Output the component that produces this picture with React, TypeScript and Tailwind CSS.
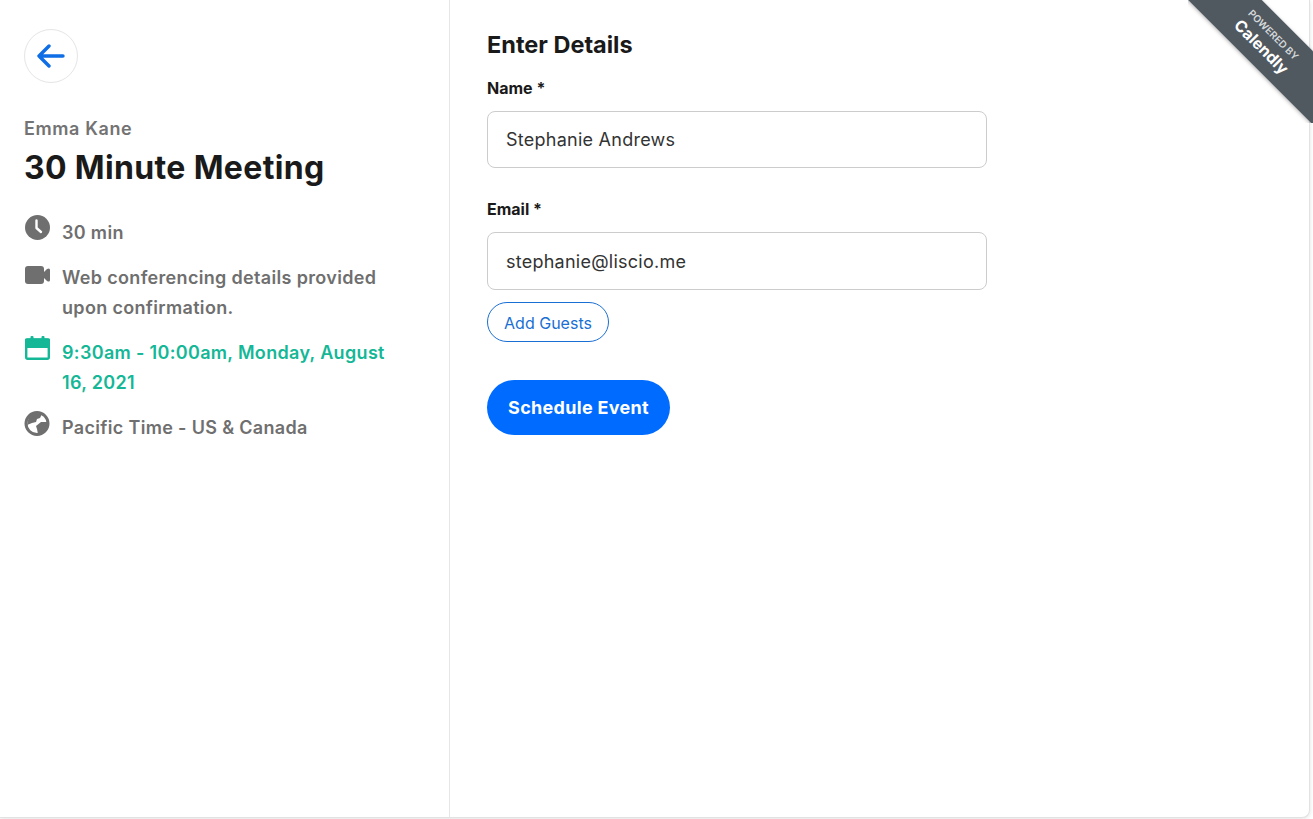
import React from "react"

const font = "font-['Inter','Noto_Sans',sans-serif]"

const Clock = () => (
    <svg width="25" height="25" viewBox="0 0 25 25" className="shrink-0">
        <circle cx="12.5" cy="12.5" r="12.5" fill="#6f6f6f" />
        <path d="M11.5 5.5v7.5l4.5 4" fill="none" stroke="#fff" strokeWidth="2.4" strokeLinecap="round" strokeLinejoin="round" />
    </svg>
)

const Video = () => (
    <svg width="25" height="18" viewBox="0 0 25 18" className="shrink-0 mt-[6px]">
        <rect x="0" y="0" width="19" height="18" rx="3" fill="#6f6f6f" />
        <path d="M18 7 L22 3 Q25 1.5 25 4 V14 Q25 16.5 22 15 L18 11 Z" fill="#6f6f6f" />
    </svg>
)

const Calendar = () => (
    <svg width="25" height="24" viewBox="0 0 25 24" className="shrink-0 mt-[1px]">
        <rect x="1.2" y="3.5" width="22.6" height="19.3" rx="1.5" fill="#fff" stroke="#14b796" strokeWidth="2.4" />
        <rect x="0" y="2.5" width="25" height="9.5" rx="1" fill="#14b796" />
        <rect x="5.5" y="0" width="3" height="5" rx="1" fill="#14b796" />
        <rect x="16.5" y="0" width="3" height="5" rx="1" fill="#14b796" />
    </svg>
)

const Globe = () => (
    <svg width="26" height="25" viewBox="0 0 26 25" className="shrink-0 mt-[1px]">
        <circle cx="13" cy="12.5" r="11" fill="#fff" stroke="#6f6f6f" strokeWidth="3" />
        <path d="M5 5 C8 2 15 1 18 3 L16 7 L13 8 L12 11 L8 12 L3 14 Z" fill="#6f6f6f" />
        <path d="M12 15 L17 11 L23 11 L23 18 L17 23 L14 23 L13 18 Z" fill="#6f6f6f" />
    </svg>
)

const Detail = ({ icon, children, green }: { icon: React.ReactNode; children: React.ReactNode; green?: boolean }) => (
    <div className="flex items-start gap-3 mb-3">
        <div className="w-[26px] flex justify-center items-start shrink-0">{icon}</div>
        <div className={`pt-[3px] w-[335px] text-[18px] font-semibold leading-[30px] tracking-[0.33px] ${green ? "text-[#14b796]" : "text-[#6f6f6f]"}`}>
            {children}
        </div>
    </div>
)

const Field = ({ label, value, h }: { label: string; value: string; h: string }) => (
    <div>
        <div className="text-[16px] font-bold leading-[24px] text-[#1a1a1a]">{label}</div>
        <div className={`mt-[11px] w-[500px] ${h} flex items-center px-[18px] rounded-lg border border-[#cccccc] bg-white text-[18px] tracking-[0.25px] text-[#333333]`}>
            {value}
        </div>
    </div>
)

const App = () => {
    return (
        <div className={`relative w-[1313px] h-[819px] overflow-hidden bg-white ${font}`}>
            <div className="flex h-[818px] w-[1310px] bg-white rounded-br-lg border-r border-b border-[#e2e2e2] shadow-[0_1px_4px_rgba(0,0,0,0.12)]">
                <div className="w-[450px] h-full shrink-0 border-r border-[#e6e6e6] pl-6 pt-[29px]">
                    <div className="w-[54px] h-[54px] rounded-full border border-[#e5e5e5] flex items-center justify-center">
                        <svg width="28" height="24" viewBox="0 0 28 24" fill="none" stroke="#0f6ee6" strokeWidth="3.4" strokeLinecap="round" strokeLinejoin="round">
                            <path d="M26 12H2M12 2 2 12l10 10" />
                        </svg>
                    </div>
                    <div className="mt-[34px] text-[18px] font-semibold leading-6 tracking-[0.6px] text-[#737373]">Emma Kane</div>
                    <h1 className="mt-[7px] text-[32px] font-bold leading-[40px] tracking-[0.35px] text-[#1a1a1a]">30 Minute Meeting</h1>
                    <div className="mt-[27px]">
                        <Detail icon={<Clock />}>30 min</Detail>
                        <Detail icon={<Video />}>Web conferencing details provided upon confirmation.</Detail>
                        <Detail icon={<Calendar />} green>9:30am - 10:00am, Monday, August 16, 2021</Detail>
                        <Detail icon={<Globe />}>Pacific Time - US &amp; Canada</Detail>
                    </div>
                </div>
                <div className="flex-1 pl-[37px] pt-[30px]">
                    <h2 className="text-[23.5px] font-bold leading-[30px] text-[#1a1a1a]">Enter Details</h2>
                    <div className="mt-[16px]">
                        <Field label="Name *" value="Stephanie Andrews" h="h-[57px]" />
                    </div>
                    <div className="mt-[29px]">
                        <Field label="Email *" value="stephanie@liscio.me" h="h-[58px]" />
                    </div>
                    <button className="mt-3 block w-[122px] h-10 rounded-full border border-[#1a6fd4] pt-[2px] text-[16px] text-[#1a6fd4]">Add Guests</button>
                    <button className="mt-[38px] block w-[183px] h-[55px] rounded-full bg-[#006bff] text-[18px] tracking-[0.3px] font-bold text-white">Schedule Event</button>
                </div>
            </div>
            {/* ribbon */}
            <div className="absolute top-0 right-0 w-[125px] h-[123px] overflow-hidden">
                <div className="absolute left-[-36px] top-[11px] w-[220px] h-[52px] rotate-45 bg-[#505860] text-white text-center pl-[13px] shadow-[0_1px_4px_rgba(0,0,0,0.3)]">
                    <div className="text-[10px] font-semibold leading-[12px] pt-[10px] text-[#d5d8da]">POWERED BY</div>
                    <div className="text-[16px] font-bold leading-[22px]">Calendly</div>
                </div>
            </div>
        </div>
    )
}

export default App
